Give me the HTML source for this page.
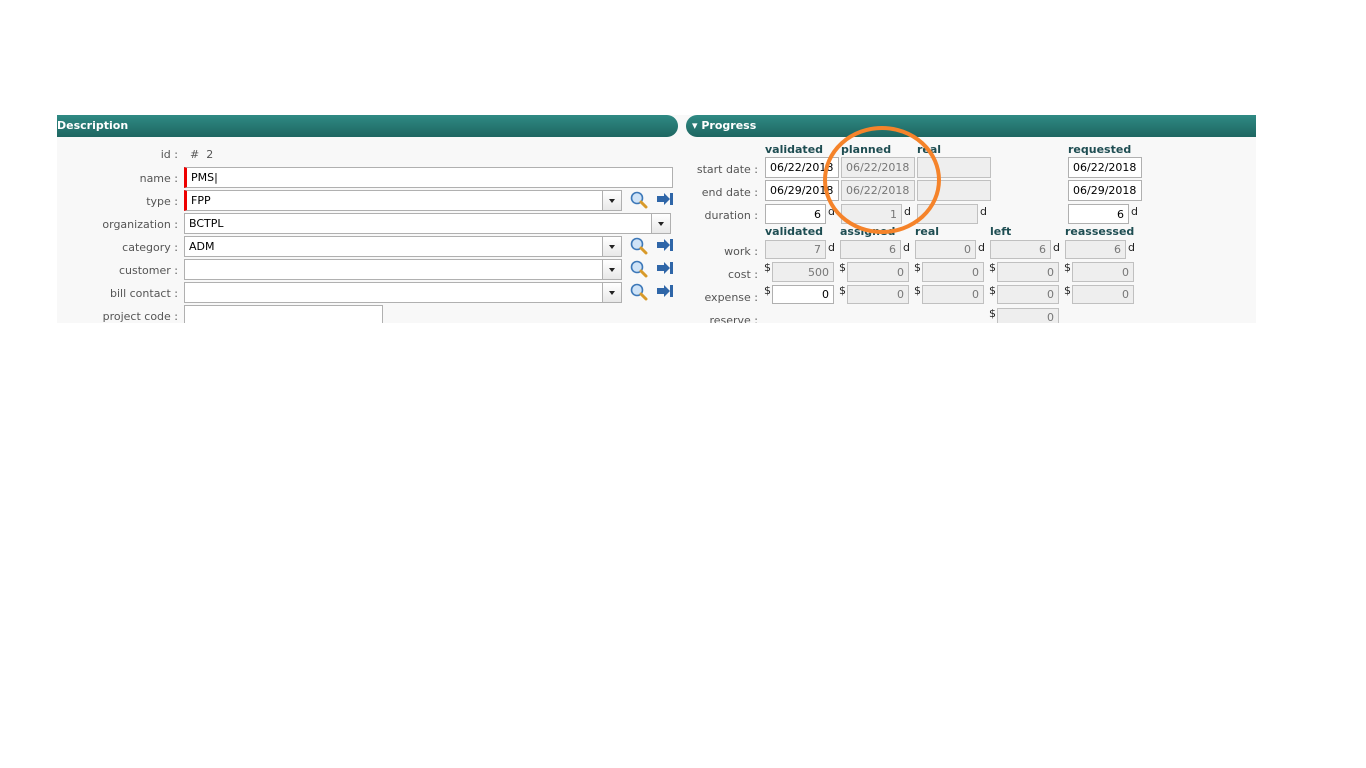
<!DOCTYPE html>
<html><head><style>
*{margin:0;padding:0;box-sizing:border-box}
body{width:1366px;height:768px;background:#fff;position:relative;overflow:hidden;font-family:Verdana,"DejaVu Sans","Liberation Sans",sans-serif;font-size:11px;color:#000}
.a{position:absolute}
.bg{left:57px;top:115px;width:1199px;height:208px;background:#f8f8f8}
.hdr{height:22px;background:linear-gradient(#2f8a84,#1e6661);color:#fff;font-weight:bold;font-size:11px;line-height:22px}
.lbl{color:#555;text-align:right;width:130px;font-size:11px}
.in{background:#fff;border:1px solid #b0b0b0;height:21px;line-height:19px;padding-left:4px;font-size:11px}
.ro{background:#eee;border:1px solid #c0c0c0;color:#777;height:21px;line-height:19px;font-size:11px}
.r{text-align:right;padding-right:4px}
.req{border-left:3px solid #e00}
.arr{position:absolute;right:0;top:0;width:19px;height:19px;border-left:1px solid #b0b0b0;background:linear-gradient(#fff,#e8e8e8)}
.arr:after{content:"";position:absolute;left:6px;top:8px;border:3.5px solid transparent;border-top:4px solid #222}
.ch{font-weight:bold;color:#1e4d52;font-size:11px}
.d{font-size:11px;color:#222}
</style></head><body>
<div class="a bg"></div>
<div class="a hdr" style="left:57px;top:115px;width:621px;border-radius:0 11px 11px 0;padding-left:0">Description</div>
<div class="a hdr" style="left:686px;top:115px;width:570px;border-radius:11px 0 0 11px;padding-left:6px">&#9662; Progress</div>

<div class="a lbl" style="left:48px;top:148px">id :</div>
<div class="a" style="left:190px;top:148px;color:#555">#&nbsp; 2</div>
<div class="a lbl" style="left:48px;top:172px">name :</div>
<div class="a in req" style="left:184px;top:167px;width:489px">PMS|</div>
<div class="a lbl" style="left:48px;top:195px">type :</div>
<div class="a in req" style="left:184px;top:190px;width:438px">FPP<span class="arr"></span></div>
<div class="a lbl" style="left:48px;top:218px">organization :</div>
<div class="a in" style="left:184px;top:213px;width:487px">BCTPL<span class="arr"></span></div>
<div class="a lbl" style="left:48px;top:241px">category :</div>
<div class="a in" style="left:184px;top:236px;width:438px">ADM<span class="arr"></span></div>
<div class="a lbl" style="left:48px;top:264px">customer :</div>
<div class="a in" style="left:184px;top:259px;width:438px"><span class="arr"></span></div>
<div class="a lbl" style="left:48px;top:287px">bill contact :</div>
<div class="a in" style="left:184px;top:282px;width:438px"><span class="arr"></span></div>
<div class="a lbl" style="left:48px;top:310px">project code :</div>
<div class="a in" style="left:184px;top:305px;width:199px;height:18px;border-bottom:none"></div>

<svg class="a" style="left:628px;top:189px" width="50" height="115">
<g id="ic">
<circle cx="9" cy="9" r="5.5" fill="#cfe3f7" stroke="#3d78b8" stroke-width="1.6"/>
<line x1="13" y1="13" x2="18" y2="18" stroke="#d89a2a" stroke-width="3" stroke-linecap="round"/>
<path d="M29 7h7v-3l6 6-6 6v-3h-7z" fill="#2f66a8"/><rect x="42" y="4" width="3" height="12" fill="#2f66a8"/>
</g>
<use href="#ic" y="46"/><use href="#ic" y="69"/><use href="#ic" y="92"/>
</svg>

<div class="a ch" style="left:765px;top:143px">validated</div>
<div class="a ch" style="left:841px;top:143px">planned</div>
<div class="a ch" style="left:917px;top:143px">real</div>
<div class="a ch" style="left:1068px;top:143px">requested</div>
<div class="a lbl" style="left:628px;top:163px">start date :</div>
<div class="a in" style="left:765px;top:157px;width:74px">06/22/2018</div>
<div class="a ro" style="left:841px;top:157px;width:74px;padding-left:4px">06/22/2018</div>
<div class="a ro" style="left:917px;top:157px;width:74px"></div>
<div class="a in" style="left:1068px;top:157px;width:74px">06/22/2018</div>
<div class="a lbl" style="left:628px;top:186px">end date :</div>
<div class="a in" style="left:765px;top:180px;width:74px">06/29/2018</div>
<div class="a ro" style="left:841px;top:180px;width:74px;padding-left:4px">06/22/2018</div>
<div class="a ro" style="left:917px;top:180px;width:74px"></div>
<div class="a in" style="left:1068px;top:180px;width:74px">06/29/2018</div>
<div class="a lbl" style="left:628px;top:209px">duration :</div>
<div class="a in r" style="left:765px;top:204px;width:61px;height:20px">6</div><div class="a d" style="left:828px;top:205px">d</div>
<div class="a ro r" style="left:841px;top:204px;width:61px;height:20px">1</div><div class="a d" style="left:904px;top:205px">d</div>
<div class="a ro" style="left:917px;top:204px;width:61px;height:20px"></div><div class="a d" style="left:980px;top:205px">d</div>
<div class="a in r" style="left:1068px;top:204px;width:61px;height:20px">6</div><div class="a d" style="left:1131px;top:205px">d</div>

<div class="a ch" style="left:765px;top:225px">validated</div>
<div class="a ch" style="left:840px;top:225px">assigned</div>
<div class="a ch" style="left:915px;top:225px">real</div>
<div class="a ch" style="left:990px;top:225px">left</div>
<div class="a ch" style="left:1065px;top:225px">reassessed</div>
<div class="a lbl" style="left:628px;top:245px">work :</div>
<div class="a ro r" style="left:765px;top:240px;width:61px;height:19px;line-height:17px">7</div><div class="a d" style="left:828px;top:241px">d</div>
<div class="a ro r" style="left:840px;top:240px;width:61px;height:19px;line-height:17px">6</div><div class="a d" style="left:903px;top:241px">d</div>
<div class="a ro r" style="left:915px;top:240px;width:61px;height:19px;line-height:17px">0</div><div class="a d" style="left:978px;top:241px">d</div>
<div class="a ro r" style="left:990px;top:240px;width:61px;height:19px;line-height:17px">6</div><div class="a d" style="left:1053px;top:241px">d</div>
<div class="a ro r" style="left:1065px;top:240px;width:61px;height:19px;line-height:17px">6</div><div class="a d" style="left:1128px;top:241px">d</div>

<div class="a lbl" style="left:628px;top:268px">cost :</div>
<div class="a lbl" style="left:628px;top:291px">expense :</div>
<div class="a lbl" style="left:628px;top:314px;height:9px;overflow:hidden">reserve :</div>

<div class="a d" style="left:764px;top:261px">$</div><div class="a ro r" style="left:772px;top:262px;width:62px;height:20px">500</div>
<div class="a d" style="left:839px;top:261px">$</div><div class="a ro r" style="left:847px;top:262px;width:62px;height:20px">0</div>
<div class="a d" style="left:914px;top:261px">$</div><div class="a ro r" style="left:922px;top:262px;width:62px;height:20px">0</div>
<div class="a d" style="left:989px;top:261px">$</div><div class="a ro r" style="left:997px;top:262px;width:62px;height:20px">0</div>
<div class="a d" style="left:1064px;top:261px">$</div><div class="a ro r" style="left:1072px;top:262px;width:62px;height:20px">0</div>

<div class="a d" style="left:764px;top:284px">$</div><div class="a in r" style="left:772px;top:285px;width:62px;height:19px;line-height:17px">0</div>
<div class="a d" style="left:839px;top:284px">$</div><div class="a ro r" style="left:847px;top:285px;width:62px;height:19px;line-height:17px">0</div>
<div class="a d" style="left:914px;top:284px">$</div><div class="a ro r" style="left:922px;top:285px;width:62px;height:19px;line-height:17px">0</div>
<div class="a d" style="left:989px;top:284px">$</div><div class="a ro r" style="left:997px;top:285px;width:62px;height:19px;line-height:17px">0</div>
<div class="a d" style="left:1064px;top:284px">$</div><div class="a ro r" style="left:1072px;top:285px;width:62px;height:19px;line-height:17px">0</div>

<div class="a d" style="left:989px;top:307px">$</div><div class="a ro r" style="left:997px;top:308px;width:62px;height:15px;line-height:17px;border-bottom:none;overflow:hidden">0</div>

<svg class="a" style="left:820px;top:122px" width="125" height="115"><ellipse cx="62" cy="58" rx="57" ry="52" fill="none" stroke="#f5832a" stroke-width="4"/></svg>
</body></html>
